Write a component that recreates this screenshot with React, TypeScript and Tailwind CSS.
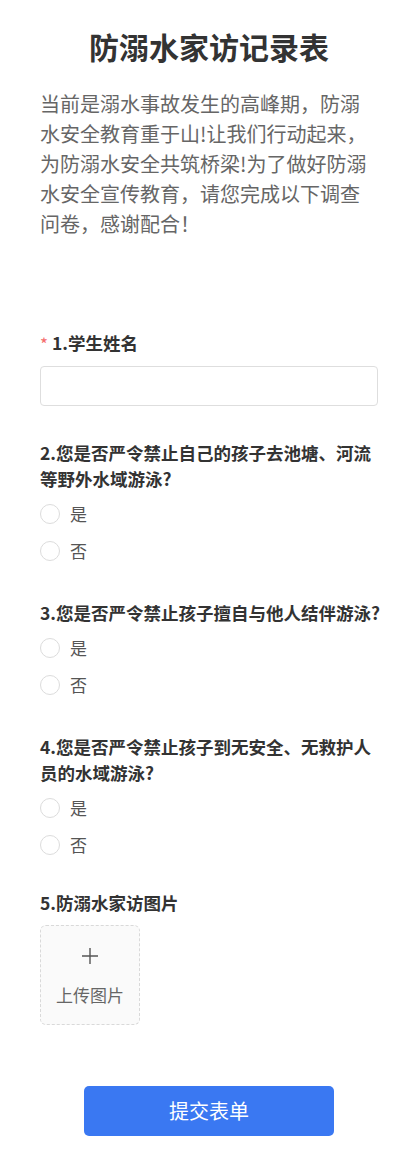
import { useState } from 'react'

const FONT = { fontFamily: '"Noto Sans CJK SC", "Noto Sans", sans-serif' }

const QUESTIONS = [
  { id: 2, title: '2.您是否严令禁止自己的孩子去池塘、河流等野外水域游泳?' },
  { id: 3, title: '3.您是否严令禁止孩子擅自与他人结伴游泳?' },
  { id: 4, title: '4.您是否严令禁止孩子到无安全、无救护人员的水域游泳?' },
]

const OPTIONS = ['是', '否']

function Radio({ checked, label, onClick }: { checked: boolean; label: string; onClick: () => void }) {
  return (
    <button onClick={onClick} className="flex items-center h-[37px] text-left">
      <span
        className={`w-5 h-5 rounded-full border flex items-center justify-center shrink-0 ${
          checked ? 'border-[#3a78f2]' : 'border-[#dcdcdc]'
        }`}
      >
        {checked && <span className="w-2.5 h-2.5 rounded-full bg-[#3a78f2]" />}
      </span>
      <span className="ml-[10px] text-[17px] text-[#555] leading-none">{label}</span>
    </button>
  )
}

export default function App() {
  const [name, setName] = useState('')
  const [answers, setAnswers] = useState<Record<number, string>>({})

  return (
    <div className="min-h-screen bg-white px-10 pt-6 pb-5" style={FONT}>
      {/* Header */}
      <h1 className="text-center text-[30px] leading-[45px] font-bold text-[#333]">防溺水家访记录表</h1>
      <p className="mt-5 text-[20px] leading-[30px] text-[#666]">
        当前是溺水事故发生的高峰期，防溺水安全教育重于山!让我们行动起来，为防溺水安全共筑桥梁!为了做好防溺水安全宣传教育，请您完成以下调查问卷，感谢配合！
      </p>

      {/* Q1 */}
      <div className="mt-[90px]">
        <div className="flex items-center text-[17.5px] leading-[26px] font-bold text-[#333]">
          <span className="text-[#f56c6c] text-[17px] font-normal mr-[4px] mt-[2px]">*</span>
          1.学生姓名
        </div>
        <input
          type="text"
          value={name}
          onChange={e => setName(e.target.value)}
          className="mt-[9px] w-full h-10 rounded border border-[#dedede] px-3 text-[16px] text-[#333] focus:outline-none focus:border-[#3a78f2]"
        />
      </div>

      {/* Q2 - Q4 */}
      {QUESTIONS.map((q, i) => (
        <div key={q.id} className={i === 0 ? 'mt-[34px]' : 'mt-[31px]'}>
          <div className="-mr-[6px] text-[17.5px] leading-[26px] font-bold text-[#333]">{q.title}</div>
          <div className="mt-[3px] flex flex-col">
            {OPTIONS.map(o => (
              <Radio
                key={o}
                label={o}
                checked={answers[q.id] === o}
                onClick={() => setAnswers(a => ({ ...a, [q.id]: o }))}
              />
            ))}
          </div>
        </div>
      ))}

      {/* Q5 */}
      <div className="mt-[27px]">
        <div className="text-[17.5px] leading-[26px] font-bold text-[#333]">5.防溺水家访图片</div>
        <button className="mt-[9px] w-[100px] h-[100px] rounded-md border border-dashed border-[#d9d9d9] bg-[#fafafa] flex flex-col items-center justify-center">
          <svg width="16" height="16" viewBox="0 0 16 16">
            <path d="M8 0v16M0 8h16" stroke="#555" strokeWidth="1.4" />
          </svg>
          <span className="mt-[22px] text-[17px] leading-none text-[#666]">上传图片</span>
        </button>
      </div>

      {/* Submit */}
      <div className="mt-[61px] flex justify-center">
        <button className="w-[250px] h-[50px] rounded-[5px] bg-[#3a78f2] text-white text-[20px]">提交表单</button>
      </div>
    </div>
  )
}
